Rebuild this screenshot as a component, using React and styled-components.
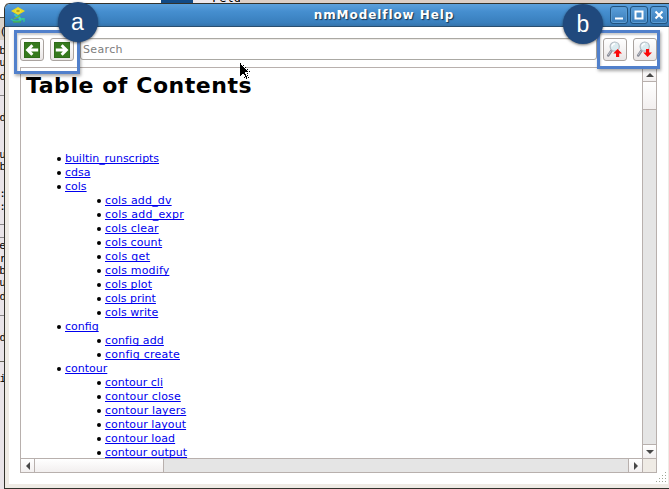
import React from "react";
import styled, { createGlobalStyle, css } from "styled-components";

const Global = createGlobalStyle`
  * { box-sizing: border-box; }
  body { margin: 0; overflow: hidden; font-family: "DejaVu Sans", sans-serif; background: #e9e3e6; }
`;

const Desktop = styled.div`
  position: relative;
  width: 669px;
  height: 489px;
  overflow: hidden;
  background: #ddd2cb;
`;

const Terminal = styled.div`
  position: absolute;
  left: 0;
  top: 0;
  width: 6px;
  height: 489px;
  overflow: hidden;
  background: linear-gradient(#fff 0 17px, #55544c 17px 18px, #d9d2c9 18px 40px, #e9e4e8 40px 361px, #68675b 361px 362px, #e9e4e8 362px);
`;

const Fragment = styled.span`
  position: absolute;
  right: 0;
  top: ${(p) => p.$y}px;
  font: 11px/11px "DejaVu Sans Mono", monospace;
  color: #000;
`;

const BackStrip = styled.div`
  position: absolute;
  left: 0;
  top: 0;
  width: 669px;
  height: 3px;
  display: grid;
  grid-template-columns: 161px 32px 19px 28px 1fr;
  overflow: hidden;
  font: 12px/12px "DejaVu Sans Mono", monospace;
  color: #000;
`;

const StripCell = styled.div`
  background: ${(p) => p.$c};
  height: 3px;
`;

const StripText = styled.span`
  display: block;
  margin-top: -8px;
`;

const Window = styled.div`
  position: absolute;
  left: 4px;
  top: 3px;
  width: 665px;
  height: 486px;
  display: flex;
  flex-direction: column;
  background: #efebe5;
  border: solid #32322c;
  border-width: 1px 0 1px 1px;
  border-radius: 6px 0 0 0;
  overflow: hidden;
`;

const TitleBar = styled.header`
  height: 23px;
  flex: none;
  display: flex;
  align-items: center;
  padding: 0 1px 0 5px;
  background: linear-gradient(#5ba0dc, #458ecf 35%, #397fbd 85%, #3674ab);
  border-bottom: 1px solid #2a4f70;
`;

const Title = styled.h1`
  flex: 1;
  margin: 0 0 0 132px;
  text-align: center;
  font-size: 12px;
  letter-spacing: 0.92px;
  line-height: 22px;
  color: #fff;
  text-shadow: 1px 1px 1px #17334d;
  white-space: nowrap;
`;

const WindowButtons = styled.div`
  display: flex;
  gap: 2px;
`;

const WindowButton = styled.button`
  width: 18px;
  height: 18px;
  padding: 0;
  border: 1px solid #22537e;
  border-radius: 3px;
  background: linear-gradient(#5a9fdb, #397bb7);
  box-shadow: inset 0 0 0 1px #5a9bd2;
  svg { display: block; }
`;

const Body = styled.main`
  flex: 1;
  display: flex;
  flex-direction: column;
  margin: 0 1px 4px 4px;
  padding: 11px 11px 0;
  background: #fff;
`;

const Toolbar = styled.div`
  display: flex;
  flex: none;
  height: 23px;
`;

const ToolButton = styled.button`
  width: 24px;
  height: 23px;
  padding: 0;
  margin-right: ${(p) => p.$after || 0}px;
  display: grid;
  place-items: center;
  border: 1px solid #aaa39f;
  border-radius: 3px;
  background: linear-gradient(#fff, #f4f2f2 55%, #e9e5e5);
  svg { display: block; }
`;

const Search = styled.input`
  width: 517px;
  height: 22px;
  margin-right: 6px;
  padding: 0 2px;
  border: 1px solid #aaa8a3;
  border-radius: 3px;
  outline: none;
  background: #fff;
  box-shadow: inset 0 1px #eeebe7;
  font: 11px "DejaVu Sans", sans-serif;
  letter-spacing: 0.35px;
  &::placeholder { color: #7d7d7d; opacity: 1; }
`;

const Viewer = styled.section`
  width: 637px;
  height: 406px;
  margin-top: 6px;
  display: grid;
  grid-template-columns: 621px 14px;
  grid-template-rows: 390px 14px;
  border: 1px solid #b8b0ad;
`;

const Page = styled.article`
  overflow: hidden;
  padding: 4px 0 0 4px;
  background: #fff;
`;

const Heading = styled.h2`
  margin: 0 0 53px 1px;
  font-size: 22px;
  letter-spacing: 0.55px;
  line-height: 27px;
  font-weight: bold;
  color: #000;
  white-space: nowrap;
`;

const List = styled.ul`
  margin: 0;
  padding: 0 0 0 40px;
  list-style: none;
`;

const Item = styled.li`
  font-size: 11px;
  line-height: 14px;
`;

const Row = styled.div`
  display: flex;
  height: 14px;
  margin-left: -8px;
  align-items: center;
  &::before {
    content: "";
    width: 4px;
    height: 4px;
    margin-right: 4px;
    border-radius: 50%;
    background: #000;
  }
`;

const Link = styled.a`
  color: #0000ee;
  letter-spacing: ${(p) => p.$spacing}px;
  text-decoration: underline;
  text-underline-offset: 1px;
  text-decoration-thickness: 1px;
  text-decoration-skip-ink: none;
  white-space: nowrap;
`;

const line = "1px solid #b8b0ad";

const VScroll = styled.div`
  display: grid;
  grid-template-rows: 14px 28px 1fr 14px;
  border-left: ${line};
  background: #e5e5e5;
`;

const HScroll = styled.div`
  display: grid;
  grid-template-columns: 14px 129px 1fr 14px;
  border-top: ${line};
  background: #e5e5e5;
`;

const Cell = styled.div`
  display: grid;
  place-items: center;
  ${(p) => p.$side && css`border-${p.$side}: ${line};`}
  background: ${(p) => (p.$track ? "#e5e5e5" : "linear-gradient(#fff, #f2efef)")};
  svg { display: block; }
`;

const Corner = styled.div`
  border-left: ${line};
  border-top: ${line};
  background: #efebe5;
`;

const Callout = styled.div`
  position: absolute;
  left: ${(p) => p.$x}px;
  top: 30px;
  width: ${(p) => p.$w}px;
  height: ${(p) => p.$h}px;
  border: 3px solid #5180cb;
  box-shadow: 1px 2px 3px rgba(0, 0, 0, 0.35), inset 1px 2px 2px rgba(0, 0, 0, 0.2);
`;

const Badge = styled.div`
  position: absolute;
  left: ${(p) => p.$x}px;
  top: ${(p) => p.$y}px;
  width: 40px;
  height: 40px;
  border-radius: 50%;
  background: #20497d;
  box-shadow: 0 1px 3px rgba(0, 0, 0, 0.55);
  color: #fff;
  text-align: center;
  font: 23px/40px "Liberation Sans", Arial, sans-serif;
`;

const Pointer = styled.svg`
  position: absolute;
  left: 239px;
  top: 62px;
`;

const Grip = styled.svg`
  position: absolute;
  left: 655px;
  top: 471px;
`;

const ArrowIcon = ({ right }) => (
  <svg width="16" height="16" viewBox="0 0 16 16">
    <rect x=".5" y=".5" width="15" height="15" fill="#367a1e" stroke="#2f6c1a" />
    <g transform={right ? "translate(16 0) scale(-1 1)" : undefined} fill="none" stroke="#fff" strokeWidth="2.9">
      <path d="M3 8H14.2M8.4 3.2 3.6 8l4.8 4.8" />
    </g>
  </svg>
);

const MagnifierIcon = ({ down }) => (
  <svg width="18" height="18" viewBox="0 0 18 18">
    <path d="M5.6 9.4 2.2 14.4" stroke="#8a8d99" strokeWidth="2.6" strokeLinecap="round" />
    <path d="M5 10 2.2 14" stroke="#c3c6ce" strokeWidth=".9" />
    <circle cx="8.7" cy="5.6" r="4.6" fill="#dbebf0" stroke="#b3bbc2" strokeWidth="1.2" />
    <path d="M6 5.6A2.8 2.8 0 0 1 9 2.8" fill="none" stroke="#fff" strokeWidth="1.4" />
    <path d={down ? "M10 8h3.2v3.4H16L11.6 16 7.2 11.4H10Z" : "M10 16h3.2v-3.4H16L11.6 8 7.2 12.6H10Z"} fill="#fa0808" />
  </svg>
);

const LogoIcon = () => (
  <svg width="16" height="17" viewBox="0 0 16 17">
    <path d="M8 0 15 4 8 8 1 4Z" fill="#eadb22" />
    <path d="m5 4 3-2 3 2-3 2Z" fill="#b4a625" stroke="#fff45b" strokeWidth=".6" />
    <path d="M5 7c0 3 6 2 5 6" fill="none" stroke="#36c8c8" strokeWidth="2.2" />
    <path d="M10 8c0 2-5 3-6 4" fill="none" stroke="#64b84e" strokeWidth="1.5" />
    <path d="M1 12c3 3 8 3 12 0M11 11.8h3v3" fill="none" stroke="#35c795" strokeWidth="1.5" />
    <path d="M3 15h8" stroke="#51b52b" strokeWidth="1.2" />
  </svg>
);

const TRIANGLES = {
  up: "M0 6 4 2 8 6Z",
  down: "M0 2 4 6 8 2Z",
  left: "M6 0 2 4 6 8Z",
  right: "M2 0 6 4 2 8Z",
};

const Triangle = ({ dir }) => (
  <svg width="8" height="8" viewBox="0 0 8 8"><path d={TRIANGLES[dir]} fill="#484848" /></svg>
);

const CONTROL_PATHS = ["M4 11.5h8", "M4.5 4.5h7v7h-7Z", "m4.5 4.5 7 7m0-7-7 7"];

const CONTENTS = [
  { name: "builtin_runscripts", spacing: -0.04 },
  { name: "cdsa" },
  {
    name: "cols",
    children: [
      { name: "cols add_dv", spacing: 0.17 },
      { name: "cols add_expr", spacing: 0.25 },
      { name: "cols clear", spacing: 0.15 },
      { name: "cols count", spacing: 0.1 },
      { name: "cols get", spacing: 0.25 },
      { name: "cols modify", spacing: 0.15 },
      { name: "cols plot", spacing: 0.1 },
      { name: "cols print" },
      { name: "cols write", spacing: 0.05 },
    ],
  },
  { name: "config", children: [{ name: "config add", spacing: 0.1 }, { name: "config create", spacing: 0.22 }] },
  {
    name: "contour",
    children: [
      { name: "contour cli" },
      { name: "contour close", spacing: 0.13 },
      { name: "contour layers", spacing: 0.15 },
      { name: "contour layout", spacing: 0.07 },
      { name: "contour load", spacing: 0.07 },
      { name: "contour output" },
    ],
  },
];

const FRAGMENTS = [
  [26, "("], [45, "ab"], [57, "fu"], [71, "d"], [84, "d_"], [112, "d"], [149, "au"], [161, "b"],
  [188, "a:"], [201, "a:"], [213, "f_"], [226, "_"], [240, "ne"], [253, "r"],
  [265, "ab"], [277, "fu"], [291, "d"], [304, "d_"], [332, "d"], [373, "i"],
];

const Entry = ({ name, spacing = 0, entries }) => (
  <Item>
    <Row><Link $spacing={spacing}>{name}</Link></Row>
    {entries && <List>{entries.map((c) => <Entry key={c.name} {...c} />)}</List>}
  </Item>
);

export default function App() {
  return (
    <Desktop>
      <Global />
      <Terminal>{FRAGMENTS.map(([y, text]) => <Fragment key={y} $y={y}>{text}</Fragment>)}</Terminal>
      <BackStrip>
        <StripCell $c="#fff" />
        <StripCell $c="#124a85" />
        <StripCell $c="#eee8ec" />
        <StripCell $c="#eee8ec"><StripText>Feld</StripText></StripCell>
        <StripCell $c="#dccfc6" />
      </BackStrip>
      <Window>
        <TitleBar>
          <LogoIcon />
          <Title>nmModelflow Help</Title>
          <WindowButtons>
            {CONTROL_PATHS.map((d) => (
              <WindowButton key={d}>
                <svg width="16" height="16" viewBox="0 0 16 16"><path d={d} fill="none" stroke="#fff" strokeWidth="2" /></svg>
              </WindowButton>
            ))}
          </WindowButtons>
        </TitleBar>
        <Body>
          <Toolbar>
            <ToolButton $after={6}><ArrowIcon /></ToolButton>
            <ToolButton $after={6}><ArrowIcon right /></ToolButton>
            <Search placeholder="Search" />
            <ToolButton $after={6}><MagnifierIcon /></ToolButton>
            <ToolButton><MagnifierIcon down /></ToolButton>
          </Toolbar>
          <Viewer>
            <Page>
              <Heading>Table of Contents</Heading>
              <List>
                {CONTENTS.map((c) => <Entry key={c.name} name={c.name} spacing={c.spacing} entries={c.children} />)}
              </List>
            </Page>
            <VScroll>
              <Cell $side="bottom"><Triangle dir="up" /></Cell>
              <Cell $side="bottom" />
              <Cell $track />
              <Cell $side="top"><Triangle dir="down" /></Cell>
            </VScroll>
            <HScroll>
              <Cell $side="right"><Triangle dir="left" /></Cell>
              <Cell $side="right" />
              <Cell $track />
              <Cell $side="left"><Triangle dir="right" /></Cell>
            </HScroll>
            <Corner />
          </Viewer>
        </Body>
      </Window>
      <Grip width="12" height="12" viewBox="0 0 12 12">
        <path d="M10 1.5h1M7 4.5h1M10 4.5h1M4 7.5h1M7 7.5h1M10 7.5h1M1 10.5h1M4 10.5h1M7 10.5h1M10 10.5h1" stroke="#9fa797" />
      </Grip>
      <Pointer width="12" height="19" viewBox="0 0 12 19" shapeRendering="crispEdges">
        <path d="M1 0v15l3-3 3 6 2-1-3-6h5Z" fill="#fff" />
        <path d="M1 1v13l3-3 1 2h1v2h1v2h1v-3H7v-2H6v-2h3V9H8V8H7V7H6V6H5V5H4V4H3V3H2V1Z" fill="#000" />
        <path d="M4 3h1v1H4ZM6 5h1v1H6ZM8 7h1v1H8ZM10 9h1v1h-1ZM8 11h1v1H8ZM8 13h1v1H8ZM5 15h1v1H5ZM9 15h1v1H9Z" fill="#000" />
      </Pointer>
      <Callout $x={14} $w={66} $h={44} />
      <Callout $x={597} $w={63} $h={39} />
      <Badge $x={57.5} $y={2}>a</Badge>
      <Badge $x={563} $y={4}>b</Badge>
    </Desktop>
  );
}
